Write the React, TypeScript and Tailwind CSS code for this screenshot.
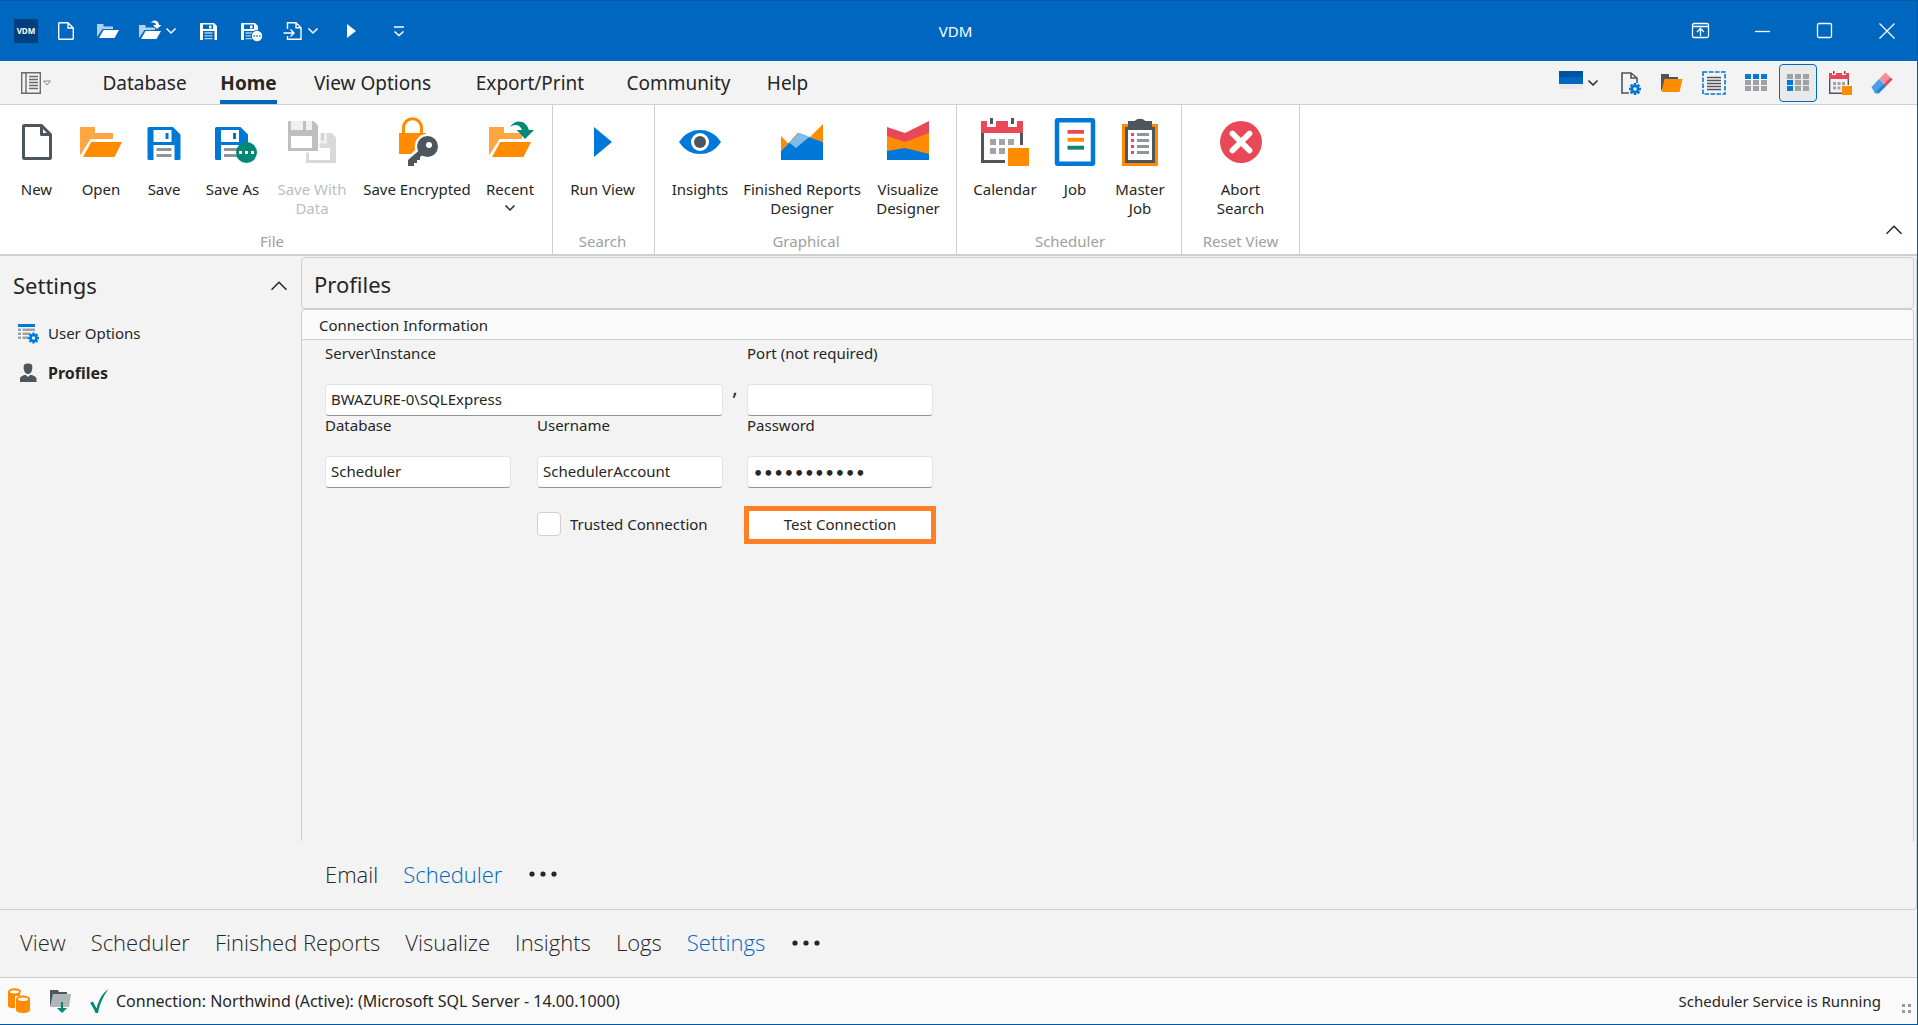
import type { ReactNode } from 'react'
import clsx from 'clsx'

/* ---------- shared drawings ---------- */

function Gear({ cx, cy, r, hole }: { cx: number; cy: number; r: number; hole: string }) {
  return (
    <g transform={`translate(${cx} ${cy})`}>
      {[0, 45, 90, 135].map((a) => (
        <rect key={a} x={-r * 0.22} y={-r} width={r * 0.44} height={r * 2} fill="#0078d7" transform={`rotate(${a})`} />
      ))}
      <circle r={r * 0.72} fill="#0078d7" />
      <circle r={r * 0.3} fill={hole} />
    </g>
  )
}

function Chevron({ up, className }: { up?: boolean; className?: string }) {
  return (
    <svg viewBox="0 0 12 8" className={className} fill="none" stroke="currentColor" strokeWidth={up ? 1 : 1.5}>
      <path d={up ? 'M1 6.500 6 1.500l5 5' : 'M1.5 1.5 6 6l4.500-4.500'} />
    </svg>
  )
}

function Dots({ className }: { className?: string }) {
  return (
    <svg viewBox="0 0 28 6" className={clsx('h-[6px] w-7 fill-[#262626]', className)}>
      <circle cx="3" cy="3" r="2.600" />
      <circle cx="14" cy="3" r="2.600" />
      <circle cx="25" cy="3" r="2.600" />
    </svg>
  )
}

/* ---------- ribbon icons, drawn on a 32 grid ---------- */

const floppy = (
  <>
    <path d="M5 7a1 1 0 0 1 1-1h16l5 5v16a1 1 0 0 1-1 1h-3V18H9v10H6a1 1 0 0 1-1-1z" fill="#0078d7" />
    <path d="M9 8h12v8H9z" fill="#fff" />
    <path d="M17 10h2v4h-2z" fill="#0078d7" />
    <path d="M11 20h10v2H11zM11 24h10v2H11z" fill="#8f9599" />
  </>
)

const openFolder = (
  <>
    <path d="M2 6h10v4h12v4H9L2 25z" fill="#ffa640" />
    <path d="M9.500 16H30l-5 10H4z" fill="#ff8c00" />
  </>
)

const icons: Record<string, ReactNode> = {
  new: <path d="M19 5H7.500a.500.500 0 0 0-.500.500v21a.500.500 0 0 0 .500.500h17a.500.500 0 0 0 .500-.500V11zM19 5v6h6" fill="none" stroke="#4d565c" strokeWidth="2" strokeLinejoin="round" />,
  open: openFolder,
  save: floppy,
  saveAs: (
    <g transform="translate(-1 0)">
      {floppy}
      <circle cx="26" cy="23" r="7" fill="#038777" />
      <path d="M21 22h2v2h-2zM25 22h2v2h-2zM29 22h2v2h-2z" fill="#fff" />
    </g>
  ),
  saveWith: (
    <>
      <path d="M12 10h17l3 3v17H12z" fill="#d9d9d9" />
      <path d="M14 20h14v8H14z" fill="#fff" />
      <path d="M20 10h6v7h-6z" fill="#efefef" />
      <path d="M22 10h2v5h-2z" fill="#d2d2d2" />
      <path d="M-1 1h22v22H-1z" fill="#fff" />
      <path d="M0 2h17l3 3v17H0z" fill="#bfbfbf" />
      <path d="M2 2h14v6H2z" fill="#f0f0f0" />
      <path d="M10 2h2v6h-2z" fill="#bfbfbf" />
      <path d="M2 12h14v8H2z" fill="#fff" />
    </>
  ),
  encrypt: (
    <>
      <path d="M7 11V6.500a6 6 0 0 1 12 0V11" fill="none" stroke="#ff8c00" strokeWidth="2" />
      <path d="M4 10h18v14H4z" fill="#ff8c00" />
      <circle cx="23" cy="19" r="8.500" fill="#fff" />
      <path d="M16 20l-8 8v6h6v-3l8-6z" fill="#fff" />
      <path d="M17.500 21.500 10 28v4h4v-2h2v-2h2v-2l4-3z" fill="#4d565c" />
      <circle cx="23" cy="19" r="7" fill="#4d565c" />
      <circle cx="24" cy="18" r="2" fill="#fff" />
    </>
  ),
  recent: (
    <>
      {openFolder}
      <path d="M15 8c1-6 11-9 14.500-1H33l-7 7-6-6.500h4.500C22 3.500 18 5 16 8z" fill="#fff" />
      <path d="M16 6c3-5.500 11-5 12.500 2H32l-6 6-5.500-6H24c-1-3.500-5-4.500-8-2z" fill="#038777" />
    </>
  ),
  run: <path d="M10 6v20l12-10z" fill="#0078d7" />,
  eye: (
    <>
      <path d="M2 16C6 10 11 8 16 8s10 2 14 8c-4 6-9 8-14 8S6 22 2 16z" fill="#0078d7" />
      <circle cx="16" cy="16" r="6" fill="#fff" />
      <circle cx="16" cy="16" r="4" fill="#4d565c" />
    </>
  ),
  reports: (
    <>
      <path d="M2 12l5 5 6-7 7 4L30 4v12l-9-3-9 7-5-3-5 5z" fill="#ff8c00" />
      <path d="M2 22 14 10l6 2.500 10 3.500v12H2z" fill="#0078d7" />
      <path d="M7.500 16.500 14 10l7 2.500-9 7.500z" fill="#80bceb" />
    </>
  ),
  visualize: (
    <>
      <path d="M2 6l12 4 16-8v10l-16 6-12-5z" fill="#e94957" />
      <path d="M2 12l12 4 16-6v15H2z" fill="#ff8c00" />
      <path d="M2 22l12-2 16 4v4H2z" fill="#0078d7" />
    </>
  ),
  calendar: (
    <g transform="translate(-2 0)">
      <path d="M3 8v21h14M29 8v10" fill="none" stroke="#4d565c" strokeWidth="2" />
      <path d="M2 2h4v4h6V2h8v4h6V2h4v8H2z" fill="#e94957" />
      <path d="M8 0h2v4H8zM22 0h2v4h-2z" fill="#4d565c" />
      <path d="M8 14h4v4H8zM14 14h4v4h-4zM20 14h4v4h-4zM8 20h4v4H8zM14 20h4v4h-4z" fill="#a0a5a8" />
      <rect x="18" y="18" width="17" height="15" fill="#fff" />
      <rect x="20" y="20" width="14" height="12" rx=".5" fill="#ff8c00" />
      <path d="M2 28h16v2H2z" fill="#4d565c" />
    </g>
  ),
  job: (
    <>
      <rect x="4" y="1.500" width="24" height="29" rx=".5" fill="none" stroke="#0078d7" strokeWidth="3" />
      <path d="M11 8h11v2.500H11z" fill="#e94957" />
      <path d="M11 13.200h11v2.600H11z" fill="#ff8c00" />
      <path d="M11 18.500h11v2.600H11z" fill="#038777" />
    </>
  ),
  masterJob: (
    <>
      <path d="M4 4h24v28H4z" fill="#ff8c00" />
      <path d="M6 6h20v24H6z" fill="#4d565c" />
      <path d="M8 8h16v20H8z" fill="#fff" />
      <path d="M8 2h4.500a4 3 0 0 1 7 0H24v6H8z" fill="#4d565c" />
      <path d="M10 10h2v2h-2zM10 14h2v2h-2zM10 18h2v2h-2zM10 22h2v2h-2z" fill="#e94957" />
      <path d="M14 10h8v2h-8zM14 14h8v2h-8zM14 18h8v2h-8zM14 22h8v2h-8z" fill="#8f9599" />
    </>
  ),
  abort: (
    <>
      <circle cx="16" cy="16" r="14" fill="#e94957" />
      <path d="M10.300 10.300l11.400 11.400M21.700 10.300 10.300 21.700" stroke="#fff" strokeWidth="3.800" strokeLinecap="round" />
    </>
  ),
}

/* ---------- title bar ---------- */

const titleFolder = (
  <>
    <path d="M1 18V5h6.500v2.500H17V10H6.500z" fill="#b3d1ee" />
    <path d="M7.500 11H23l-4.500 8H3z" fill="#fff" />
  </>
)

const titleFloppy = (
  <path
    fillRule="evenodd"
    d="M4 5a1 1 0 0 1 1-1h13l3 3v14h-2.500v-9H7v9H4zM7 5.500V10h10V5.500zM13 6.500h2.500v3H13z"
    fill="#fff"
  />
)

const quickAccess: { name: string; width: string; menu?: boolean; icon: ReactNode }[] = [
  { name: 'New', width: 'w-[42px]', icon: <path d="M14 3.700H5.500a.800.800 0 0 0-.800.800v15a.800.800 0 0 0 .800.800h13a.800.800 0 0 0 .800-.800V9zM14 3.700V9h5.300" fill="none" stroke="#fff" strokeWidth="1.400" /> },
  { name: 'Open', width: 'w-[42px]', icon: titleFolder },
  {
    name: 'Recent',
    width: 'w-[58px]',
    menu: true,
    icon: (
      <>
        <g transform="translate(-1 1)">{titleFolder}</g>
        <path d="M10 5c1-5 11-6 12 1h2l-5 5-5-5h2z" fill="#0067c0" />
        <path d="M11.500 4c3-4 8-3 8.500 2h2.500l-4.500 4-4-4h3c-.500-2.500-3-3-5.500-2z" fill="#fff" />
      </>
    ),
  },
  {
    name: 'Save',
    width: 'w-[42px]',
    icon: (
      <>
        {titleFloppy}
        <path d="M8.500 14h8M8.500 16.800h8M8.500 19.600h8" stroke="#b3d1ee" strokeWidth="1.300" />
      </>
    ),
  },
  {
    name: 'Save As',
    width: 'w-[46px]',
    icon: (
      <>
        <g transform="translate(-3 0)">
          {titleFloppy}
          <path d="M8.500 14h8M8.500 16.800h8M8.500 19.600h8" stroke="#b3d1ee" strokeWidth="1.300" />
        </g>
        <circle cx="17" cy="17" r="6" fill="#0067c0" />
        <circle cx="17" cy="17" r="5.200" fill="#fff" />
        <path d="M13.500 16.300h1.400v1.400h-1.400zM16.300 16.300h1.400v1.400h-1.400zM19.100 16.300h1.400v1.400h-1.400z" fill="#0067c0" />
      </>
    ),
  },
  {
    name: 'Import',
    width: 'w-[50px]',
    menu: true,
    icon: (
      <path
        d="M6.500 10V3.700H15l5 5v11.600H6.500V17M15 3.700v5h5M2.500 14h10M9.500 10.500 13 14l-3.500 3.500"
        fill="none"
        stroke="#fff"
        strokeWidth="1.400"
      />
    ),
  },
  { name: 'Run', width: 'w-[52px]', icon: <path d="M8 5v14l9-7z" fill="#fff" /> },
  { name: 'Customize', width: 'w-[44px]', icon: <path d="M7 8h10M7.500 12.500 12 16.500l4.500-4" fill="none" stroke="#fff" strokeWidth="1.500" /> },
]

const windowButtons: { name: string; icon: ReactNode }[] = [
  { name: 'Ribbon display options', icon: <><rect x="4.500" y="4.500" width="16" height="14" rx="1.500" /><path d="M4.500 7.500h16M12.500 17v-7M9 13l3.500-3.500L16 13" /></> },
  { name: 'Minimize', icon: <path d="M5 12.500h15" /> },
  { name: 'Maximize', icon: <rect x="5.500" y="4.500" width="14" height="14" rx="1.500" /> },
  { name: 'Close', icon: <path d="M5.500 4.500l15 15M20.500 4.500l-15 15" /> },
]

function TitleBar() {
  return (
    <header className="grid h-[61px] shrink-0 grid-cols-[1fr_auto_1fr] items-center border-t border-[#005aa6] bg-[#0067c0] text-white">
      <div className="flex items-center pl-[14px]">
        <span className="mr-[7px] flex h-6 w-6 items-center justify-center bg-[#003e7e] font-['Open_Sans',sans-serif] text-[8px] font-bold">
          VDM
        </span>
        {quickAccess.map((q) => (
          <button key={q.name} aria-label={q.name} className={clsx('flex h-8 items-center justify-center gap-[2px]', q.width)}>
            <svg viewBox="0 0 24 24" className="h-6 w-6">{q.icon}</svg>
            {q.menu && <Chevron className="h-2 w-3" />}
          </button>
        ))}
      </div>
      <h1 className="pr-[6px] text-[15px]">VDM</h1>
      <div className="flex justify-end">
        {windowButtons.map((b) => (
          <button key={b.name} aria-label={b.name} className="flex h-10 w-[62px] items-center justify-center">
            <svg viewBox="0 0 24 24" className="h-6 w-6 fill-none stroke-white stroke-[1.3px]">{b.icon}</svg>
          </button>
        ))}
      </div>
    </header>
  )
}

/* ---------- ribbon tabs ---------- */

const ribbonTabs = [
  { label: 'Database', width: 'w-[105px]' },
  { label: 'Home', width: 'w-[103px]' },
  { label: 'View Options', width: 'w-[145px]' },
  { label: 'Export/Print', width: 'w-[170px]' },
  { label: 'Community', width: 'w-[127px]' },
  { label: 'Help', width: 'w-[91px]' },
]

const gridCells = (blue: number[]) =>
  [0, 1, 2, 3, 4, 5, 6, 7, 8].map((i) => (
    <rect
      key={i}
      x={1 + (i % 3) * 8}
      y={3 + Math.floor(i / 3) * 6}
      width="6"
      height="5"
      fill={blue.includes(i) ? '#0078d7' : '#a0a3a5'}
    />
  ))

const viewTools: { name: string; active?: boolean; icon: ReactNode }[] = [
  {
    name: 'Page settings',
    icon: (
      <>
        <path d="M11 22H4V2h9l6 5v5M13 2v5h6" fill="none" stroke="#4d565c" strokeWidth="1.600" />
        <Gear cx={17} cy={18} r={6} hole="#f3f3f3" />
      </>
    ),
  },
  {
    name: 'Folder',
    icon: (
      <>
        <path d="M1 3h8v3h9v3H6L2 19H1z" fill="#4d565c" />
        <path d="M4.500 8H22.500l-3 13H1.500z" fill="#ff8c00" />
      </>
    ),
  },
  {
    name: 'Select text',
    icon: (
      <>
        <rect x="1" y="1" width="22" height="22" fill="none" stroke="#0078d7" strokeWidth="1.600" strokeDasharray="4.500 1.500" />
        <path d="M5 6.500h14M5 9.500h14M5 12.500h14M5 15.500h14M5 18.500h14" stroke="#4d565c" strokeWidth="1.400" />
      </>
    ),
  },
  { name: 'Header row', icon: gridCells([0, 1, 2]) },
  { name: 'First column', active: true, icon: gridCells([3, 6]) },
  {
    name: 'Calendar',
    icon: (
      <>
        <path d="M1.700 6v16.300H14M20.300 6v8" fill="none" stroke="#4d565c" strokeWidth="1.400" />
        <path d="M1 2h3v2h4V2h6v2h4V2h3v6H1z" fill="#e94957" />
        <path d="M5 0h1.500v3H5zM16 0h1.500v3H16z" fill="#4d565c" />
        <path d="M5 11h3v3H5zM9.500 11h3v3h-3zM14 11h3v3h-3zM5 15.500h3v3H5zM9.500 15.500h3v3h-3z" fill="#a0a5a8" />
        <path d="M14 15h10v9H14z" fill="#ff8c00" />
      </>
    ),
  },
  {
    name: 'Clear',
    icon: (
      <>
        <path d="M9 8 15.500 1.500 22.500 8.500 16 15z" fill="#f0919b" />
        <path d="M20.500 6.500l2 2-6.500 6.500-2-2z" fill="#e94957" />
        <path d="M9 8l7 7-7.500 7.500H5L1.500 16z" fill="#4da0e4" />
        <path d="M14 13l2 2-7.500 7.500-2.500-2z" fill="#1e86dc" />
      </>
    ),
  },
]

function RibbonTabs() {
  return (
    <div className="flex h-11 shrink-0 items-stretch border-b border-[#cfcfcf] pr-[14px]">
      <button aria-label="File menu" className="flex w-[92px] items-center gap-[2px] pl-[21px]">
        <svg viewBox="0 0 20 22" className="h-[22px] w-5 fill-none stroke-[#6b6b6b] stroke-[1.4px]">
          <path d="M.700.700h18.600v20.600H.700zM5 .700v20.600M8 4.500h9M8 7.500h9M8 10.500h9M8 13.500h9M8 16.500h9" />
        </svg>
        <svg viewBox="0 0 8 6" className="h-[6px] w-2 fill-none stroke-[#8a8a8a]">
          <path d="M.500 1h7L4 5z" />
        </svg>
      </button>
      <nav className="flex text-[19px]" aria-label="Ribbon tabs">
        {ribbonTabs.map((t) => (
          <a key={t.label} href="#" className={clsx('flex justify-center', t.width)}>
            <span className={clsx('border-b-4', t.label === 'Home' ? 'border-[#0067c0] font-bold' : 'border-transparent')}>
              <span className="block h-[39px] leading-[44px]">{t.label}</span>
            </span>
          </a>
        ))}
      </nav>
      <div className="ml-auto flex items-center">
        <button aria-label="Color theme" className="mr-[10px] flex items-center gap-1">
          <span className="mb-[6px] block h-[18px] w-6 bg-[#e9e9e9]">
            <span className="block h-[6px] bg-[#0053a0]" />
            <span className="block h-[7px] bg-[#0067c0]" />
          </span>
          <Chevron className="h-2 w-3" />
        </button>
        {viewTools.map((t) => (
          <button key={t.name} aria-label={t.name} className="flex w-[42px] justify-center">
            <span
              className={clsx(
                'flex h-[38px] w-[38px] items-center justify-center rounded-sm border',
                t.active ? 'border-[#0067c0] bg-[#e9e9e9]' : 'border-transparent',
              )}
            >
              <svg viewBox="0 0 24 24" className="h-6 w-6">{t.icon}</svg>
            </span>
          </button>
        ))}
      </div>
    </div>
  )
}

/* ---------- ribbon ---------- */

interface RibbonButton {
  label: string
  icon: string
  width: string
  disabled?: boolean
  menu?: boolean
}

const ribbonGroups: { name: string; pad: string; buttons: RibbonButton[] }[] = [
  {
    name: 'File',
    pad: 'pl-1 pr-3',
    buttons: [
      { label: 'New', icon: 'new', width: 'w-[65px]' },
      { label: 'Open', icon: 'open', width: 'w-16' },
      { label: 'Save', icon: 'save', width: 'w-[62px]' },
      { label: 'Save As', icon: 'saveAs', width: 'w-[75px]' },
      { label: 'Save With Data', icon: 'saveWith', width: 'w-[84px]', disabled: true },
      { label: 'Save Encrypted', icon: 'encrypt', width: 'w-[126px]' },
      { label: 'Recent', icon: 'recent', width: 'w-[60px]', menu: true },
    ],
  },
  { name: 'Search', pad: 'pl-[9px] pr-[11px]', buttons: [{ label: 'Run View', icon: 'run', width: 'w-[81px]' }] },
  {
    name: 'Graphical',
    pad: 'pl-[9px] pr-2',
    buttons: [
      { label: 'Insights', icon: 'eye', width: 'w-[72px]' },
      { label: 'Finished Reports Designer', icon: 'reports', width: 'w-[132px]' },
      { label: 'Visualize Designer', icon: 'visualize', width: 'w-[80px]' },
    ],
  },
  {
    name: 'Scheduler',
    pad: 'pl-[10px] pr-2',
    buttons: [
      { label: 'Calendar', icon: 'calendar', width: 'w-[76px]' },
      { label: 'Job', icon: 'job', width: 'w-16' },
      { label: 'Master Job', icon: 'masterJob', width: 'w-[66px]' },
    ],
  },
  { name: 'Reset View', pad: 'px-[18px]', buttons: [{ label: 'Abort Search', icon: 'abort', width: 'w-[81px] px-2' }] },
]

function Ribbon() {
  return (
    <div className="flex h-[151px] shrink-0 border-b-2 border-[#cfcfcf] bg-white">
      {ribbonGroups.map((g) => (
        <section key={g.name} className={clsx('flex flex-col border-r border-[#cfcfcf]', g.pad)}>
          <div className="flex flex-1 items-start pt-[13px]">
            {g.buttons.map((b) => (
              <button
                key={b.label}
                disabled={b.disabled}
                className={clsx('flex flex-col items-center leading-[19px]', b.width, b.disabled && 'text-[#bdbdbd]')}
              >
                <svg viewBox="0 0 32 32" className="mb-[14px] h-12 w-12 overflow-visible">{icons[b.icon]}</svg>
                <span>{b.label}</span>
                {b.menu && <Chevron className="mt-[5px] h-2 w-3" />}
              </button>
            ))}
          </div>
          <h2 className="pb-[3px] text-center leading-5 text-[#a0a0a0]">{g.name}</h2>
        </section>
      ))}
      <button aria-label="Collapse ribbon" className="mt-auto mr-[14px] mb-[18px] ml-auto">
        <Chevron up className="h-3 w-[18px]" />
      </button>
    </div>
  )
}

/* ---------- settings page ---------- */

function Sidebar() {
  return (
    <aside className="w-[301px] shrink-0">
      <div className="flex h-[57px] items-center justify-between pr-[13px] pl-[13px]">
        <h2 className="text-[22px]">Settings</h2>
        <button aria-label="Collapse settings">
          <Chevron up className="h-3 w-[18px]" />
        </button>
      </div>
      <nav aria-label="Settings">
        <a href="#" className="flex h-[39px] items-center gap-2 pl-4">
          <svg viewBox="0 0 24 24" className="h-6 w-6">
            <path d="M2 2h17v3H2z" fill="#0078d7" />
            <path d="M2 6.500h3v2.500H2zM6.500 6.500H19V9H6.500zM2 10.500h3V13H2zM6.500 10.500H14V13H6.500zM2 14.500h3V17H2zM6.500 14.500H12V17H6.500z" fill="#a0a3a5" />
            <Gear cx={17.5} cy={16} r={5.5} hole="#f3f3f3" />
          </svg>
          User Options
        </a>
        <a href="#" className="flex h-[39px] items-center gap-2 pl-4 text-base font-bold">
          <svg viewBox="0 0 24 24" className="h-6 w-6 fill-[#4d565c]">
            <path d="M8 4c1-2 7-2 8 0 .600 2 .400 3.500 0 5-.600 2.500-2 4-4 4s-3.400-1.500-4-4c-.400-1.500-.600-3 0-5z" />
            <path d="M4 21v-3c0-2.500 3-3.500 5.500-4.200L12 16l2.500-2.200C17 14.500 20.500 15.500 20.500 18v3z" />
          </svg>
          Profiles
        </a>
      </nav>
    </aside>
  )
}

const inputClass =
  'h-8 w-full rounded border border-[#e3e3e3] border-b-[#949494] bg-white px-[5px] outline-none'

function Field({ id, label, value, type = 'text', className }: { id: string; label: string; value?: string; type?: string; className?: string }) {
  return (
    <div className={className}>
      <label htmlFor={id} className="block h-10 leading-[18px]">{label}</label>
      <input
        id={id}
        type={type}
        defaultValue={value}
        className={clsx(inputClass, type === 'password' ? "pt-[2px] font-['DejaVu_Sans',sans-serif] text-base font-bold" : 'pb-[2px]')}
      />
    </div>
  )
}

function ProfilesPanel() {
  return (
    <div className="flex min-w-0 flex-1 flex-col pr-[2px]">
      <h2 className="flex h-[52px] shrink-0 items-center rounded border border-[#cfcfcf] pt-[3px] pl-3 text-[22px]">Profiles</h2>
      <section className="flex-1 rounded-t border border-b-0 border-[#cfcfcf]">
        <h3 className="h-[30px] rounded-t border-b border-[#cfcfcf] bg-[#fafafa] pl-[17px] leading-[30px]">Connection Information</h3>
        <form className="grid grid-cols-[186px_26px_186px_24px_186px] pt-1 pl-[23px]">
          <Field id="server" label="Server\Instance" value="BWAZURE-0\SQLExpress" className="col-span-3" />
          <span className="pt-8 text-center text-[22px] leading-5">,</span>
          <Field id="port" label="Port (not required)" />
          <Field id="database" label="Database" value="Scheduler" className="col-start-1" />
          <Field id="username" label="Username" value="SchedulerAccount" className="col-start-3" />
          <Field id="password" label="Password" value="northwind01" type="password" className="col-start-5" />
          <label className="col-start-3 mt-[18px] flex h-[38px] items-center gap-[9px] pb-[2px]">
            <input type="checkbox" className="h-6 w-6 appearance-none rounded border border-[#cfcfcf] bg-white" />
            Trusted Connection
          </label>
          <button type="button" className="col-start-5 -mx-[3px] mt-[18px] h-[38px] border-5 border-[#ff7f27] bg-white pb-[2px]">
            Test Connection
          </button>
        </form>
      </section>
    </div>
  )
}

function TabLinks({ items, active, className }: { items: string[]; active: string; className?: string }) {
  return (
    <nav className={clsx("flex items-center gap-[25px] pb-[2px] font-['Open_Sans','Noto_Sans',sans-serif] text-[22px] font-light", className)}>
      {items.map((item) => (
        <a key={item} href="#" className={clsx(item === active && 'text-[#0067c0]')}>{item}</a>
      ))}
      <button aria-label="More" className="ml-[2px]">
        <Dots />
      </button>
    </nav>
  )
}

function StatusBar() {
  return (
    <footer className="flex h-[47px] shrink-0 items-center border-t border-[#cfcfcf] bg-[#fafafa] pr-[5px] pl-2">
      <svg viewBox="0 0 24 26" className="h-[26px] w-6">
        <path d="M0 4v14c0 3 12 3 12 0V4z" fill="#ff8c00" />
        <ellipse cx="6.500" cy="3.500" rx="6.500" ry="3.200" fill="#ff8c00" />
        <ellipse cx="6.500" cy="3.800" rx="4.500" ry="1.600" fill="#fff" />
        <path d="M7 8h15v17H7z" fill="#fafafa" />
        <path d="M8 11v11c0 4 14 4 14 0V11z" fill="#ff8c00" />
        <ellipse cx="15" cy="11" rx="7" ry="3.400" fill="#ff8c00" />
        <ellipse cx="15" cy="11.300" rx="5" ry="1.700" fill="#fff" />
      </svg>
      <svg viewBox="0 0 24 26" className="ml-4 h-[26px] w-6">
        <path d="M2 2h8l1 2h8v4H6L3 18H2z" fill="#4d565c" />
        <path d="M5 6h18l-2 13H2z" fill="#b3b6b8" />
        <path d="M13 14h2v6h4l-5 5-5-5h4z" fill="#038777" />
      </svg>
      <svg viewBox="0 0 20 26" className="ml-[17px] h-[26px] w-5">
        <path d="M1 15l3-1.500 3.500 7C9.500 12 13.500 5 19.500 1 14.500 8 11 15 9 25H6.500C5 21 3 17.500 1 15z" fill="#038777" />
      </svg>
      <span className="ml-[7px] text-base">Connection: Northwind (Active): (Microsoft SQL Server - 14.00.1000)</span>
      <span className="ml-auto">Scheduler Service is Running</span>
      <svg viewBox="0 0 10 10" className="mt-4 ml-[21px] h-[10px] w-[10px] fill-[#9a9a9a]">
        <path d="M0 0h3v3H0zM6 0h3v3H6zM0 6h3v3H0zM6 6h3v3H6z" />
      </svg>
    </footer>
  )
}

export default function App() {
  return (
    <div className="flex min-h-screen flex-col border-r border-b border-[#0058a8] bg-[#f3f3f3] font-['Noto_Sans','Open_Sans',sans-serif] text-[15px] text-[#262626]">
      <TitleBar />
      <RibbonTabs />
      <Ribbon />
      <main className="mt-px flex flex-1 flex-col rounded-r border-r border-b border-[#cfcfcf]">
        <div className="flex flex-1">
          <Sidebar />
          <ProfilesPanel />
        </div>
        <TabLinks items={['Email', 'Scheduler']} active="Scheduler" className="h-[68px] pl-[325px]" />
      </main>
      <TabLinks
        items={['View', 'Scheduler', 'Finished Reports', 'Visualize', 'Insights', 'Logs', 'Settings']}
        active="Settings"
        className="h-[67px] pl-5"
      />
      <StatusBar />
    </div>
  )
}
